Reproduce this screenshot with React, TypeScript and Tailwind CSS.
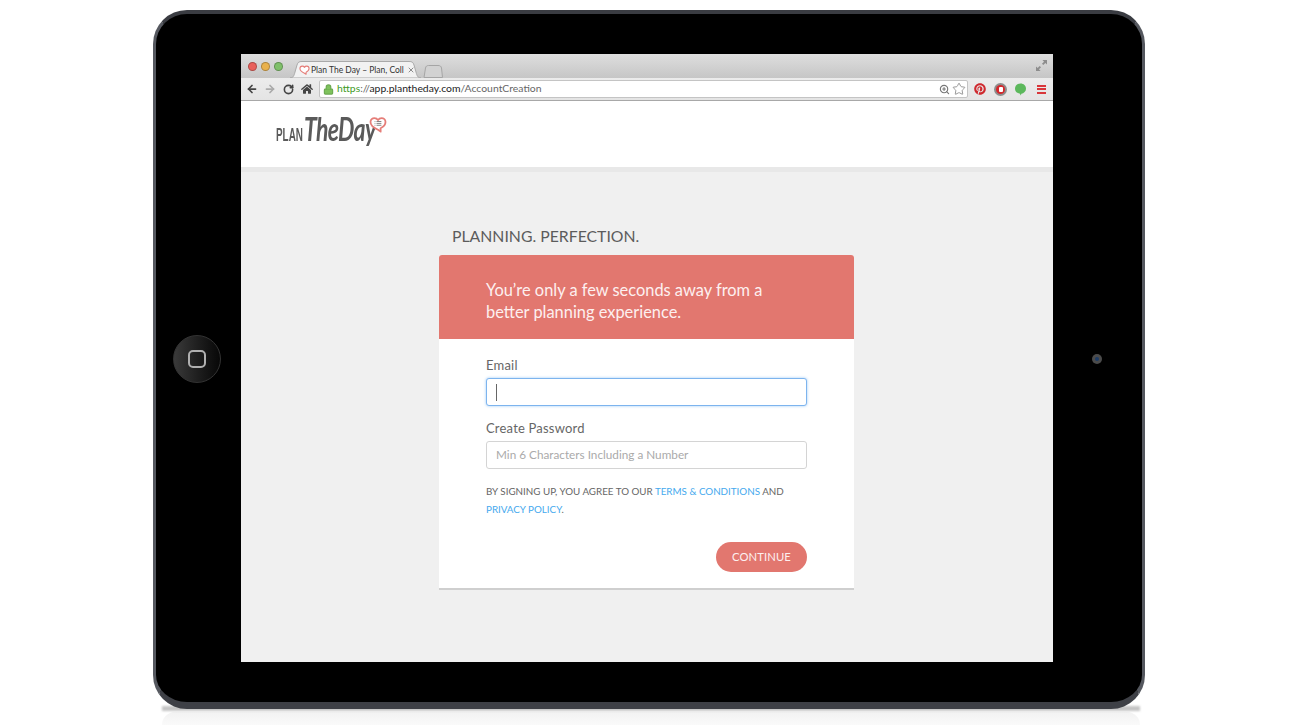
import { ArrowLeft, ArrowRight, Lock, RotateCw, Star, X, ZoomIn } from "lucide-react";
import { FaHome, FaPinterest } from "react-icons/fa";

const HeartIcon = ({ className, lines }: { className: string; lines?: boolean }) => (
  <svg viewBox="0 0 24 22" fill="none" className={className}>
    <path
      d="M12 18 C6 15.5 2 12.5 2 7.8 C2 4.5 4.5 2.5 7.2 2.5 C9.2 2.5 11 3.5 12 5.2 C13 3.5 14.8 2.5 16.8 2.5 C19.5 2.5 22 4.5 22 7.8 C22 11.8 19 14.3 15.5 16 L15.5 20.5 Z"
      stroke="#e57d78"
      strokeWidth="2.4"
      strokeLinejoin="round"
      fill="#fff"
    />
    {lines && (
      <path d="M7.5 7h1M7.5 9.5h1M7.5 12h1M10 7h6.5M10 9.5h6.5M10 12h6.5" stroke="#777" strokeWidth="1.2" />
    )}
  </svg>
);

const TrafficLight = ({ color }: { color: string }) => (
  <span className={`h-[9px] w-[9px] rounded-full border border-black/25 ${color}`} />
);

const BrowserChrome = () => (
  <>
    {/* tab strip */}
    <div className="relative flex h-6 items-start bg-gradient-to-b from-[#dedede] to-[#c6c6c6]">
      <div className="flex gap-[4px] pl-[7px] pt-[8px]">
        <TrafficLight color="bg-[#e9605b]" />
        <TrafficLight color="bg-[#e9b14c]" />
        <TrafficLight color="bg-[#7fc06a]" />
      </div>
      <div className="relative ml-[7px] mt-[7px] flex h-[17px] w-[131px] items-center pl-[9px]">
        <svg viewBox="0 0 131 17" className="absolute inset-0 h-full w-full">
          <path d="M0 17 C3 17 4 15 5 11 L7 4 C8 1 9 .5 12 .5 H119 C122 .5 123 1 124 4 L126 11 C127 15 128 17 131 17 Z" fill="#f2f2f2" stroke="#a9a9a9" />
        </svg>
        <HeartIcon className="relative h-[10px] w-[11px] shrink-0" />
        <span className="relative ml-[1px] w-[94px] overflow-hidden whitespace-nowrap pt-[2px] text-[8.5px] leading-[11px] text-[#333]">
          Plan The Day – Plan, Coll
        </span>
        <X className="relative ml-[2px] h-[8px] w-[8px] text-[#777]" strokeWidth={2.5} />
      </div>
      <svg viewBox="0 0 20 13" className="ml-[2px] mt-[11px] h-[13px] w-[20px]">
        <path d="M1 12.5 L2.5 3 C3 1 4 .5 5.5 .5 H15 C17 .5 18 1 18.5 3 L19.5 12.5 Z" fill="#d2d2d2" stroke="#a5a5a5" />
      </svg>
      <svg viewBox="0 0 12 12" className="absolute right-[6px] top-[6px] h-[11px] w-[11px]" fill="#8d8d8d">
        <path d="M7 0h5v5L10.2 3.2 8 5.5 6.5 4 8.8 1.8zM0 7l1.8 1.8L4 6.5 5.5 8 3.2 10.2 5 12H0z" />
      </svg>
    </div>
    {/* toolbar */}
    <div className="flex h-[23px] items-center border-b border-[#a8a8a8] bg-gradient-to-b from-[#ececec] to-[#e4e4e4] pl-[5px]">
      <ArrowLeft className="h-[12px] w-[12px] text-[#444]" strokeWidth={3.5} />
      <ArrowRight className="ml-[6px] h-[12px] w-[12px] text-[#aaa]" strokeWidth={3.5} />
      <RotateCw className="ml-[7px] h-[11px] w-[11px] text-[#444]" strokeWidth={3.5} />
      <FaHome className="ml-[7px] h-[12px] w-[12px] text-[#444]" />
      <div className="ml-[6px] flex h-[18px] w-[649px] items-center rounded-[2px] border border-[#c4c4c4] bg-white pl-[3px]">
        <Lock className="h-[11px] w-[11px] fill-[#7ec25c] text-[#6aa84f]" strokeWidth={2.5} />
        <span className="ml-[3px] text-[10.4px] text-[#666]">
          <span className="text-[#3f9b25]">https</span>://<span className="text-[#222]">app.plantheday.com</span>/AccountCreation
        </span>
        <ZoomIn className="ml-auto h-[11px] w-[11px] text-[#777]" strokeWidth={2.5} />
        <Star className="ml-[2px] mr-[1px] h-[14px] w-[14px] fill-white text-[#8a8a8a]" strokeWidth={1.5} />
      </div>
      <FaPinterest className="ml-[6px] h-[12px] w-[12px] text-[#cf2a2f]" />
      <div className="relative ml-[8px] flex h-[13px] w-[13px] items-center justify-center rounded-full bg-[#8d8d8d]">
        <span className="h-[9px] w-[9px] rounded-full bg-[#d4272b]" />
        <span className="absolute h-[5px] w-[4px] rounded-[1px] bg-white" />
      </div>
      <svg viewBox="0 0 12 13" className="ml-[8px] h-[13px] w-[11px]">
        <path d="M6 0C9.5 0 12 2.4 12 5.6 12 8.6 9.6 10.6 7 11 L6.2 13 5.4 11C2.6 10.6 0 8.6 0 5.6 0 2.4 2.5 0 6 0Z" fill="#5cb85c" />
      </svg>
      <div className="ml-[11px] flex w-[9px] flex-col gap-[1.5px]">
        <span className="h-[2px] bg-[#d8363a]" />
        <span className="h-[2px] bg-[#d8363a]" />
        <span className="h-[2px] bg-[#d8363a]" />
      </div>
    </div>
  </>
);

const Logo = () => (
  <div className="relative h-[66px] pl-[35px] pt-[7px] text-[#5a5a5a]">
    <div className="flex items-baseline">
      <span className="w-[28px] shrink-0 origin-left scale-x-[0.55] whitespace-nowrap font-['Liberation_Sans',sans-serif] text-[18px] leading-none font-bold">
        PLAN
      </span>
      <span className="origin-left scale-x-[0.7] text-[33px] leading-[40px] font-bold italic tracking-[-1px]">
        TheDay
      </span>
    </div>
    <HeartIcon lines className="absolute left-[128px] top-[14px] h-[19px] w-[18px]" />
  </div>
);

const Field = ({ label, placeholder, focused }: { label: string; placeholder?: string; focused?: boolean }) => (
  <div>
    <label className="block text-[13px] leading-[18px] tracking-[0.2px] text-[#666]">{label}</label>
    <div
      className={
        focused
          ? "mt-[4px] flex h-[28px] items-center rounded-[3px] border border-[#7db4ee] bg-white pl-[9px] shadow-[0_0_3px_#9cc8f5]"
          : "mt-[4px] flex h-[28px] items-center rounded-[3px] border border-[#d4d4d4] bg-white pl-[9px]"
      }
    >
      {focused && <span className="h-[17px] w-px bg-[#666]" />}
      {placeholder && <span className="text-[11.75px] text-[#aaaaaa]">{placeholder}</span>}
    </div>
  </div>
);

const SignupCard = () => (
  <div className="w-[415px]">
    <h1 className="pl-[13px] pt-[1px] text-[15.8px] leading-[19px] text-[#5c5c5c]">PLANNING. PERFECTION.</h1>
    <div className="mt-[10px] overflow-hidden rounded-t-[3px] border-b-2 border-[#cfcfcf] bg-white">
      <div className="h-[84px] bg-[#e2776f] px-[47px] pt-[24px] text-[16.4px] leading-[22px] text-[#fdf0ef]">
        You’re only a few seconds away from a
        <br />
        better planning experience.
      </div>
      <div className="h-[249px] px-[47px] pt-[17px]">
        <Field label="Email" focused />
        <div className="mt-[13px]">
          <Field label="Create Password" placeholder="Min 6 Characters Including a Number" />
        </div>
        <p className="mt-[13px] text-[9.8px] leading-[18px] text-[#666]">
          BY SIGNING UP, YOU AGREE TO OUR <span className="text-[#45a9ee]">TERMS &amp; CONDITIONS</span> AND
          <br />
          <span className="text-[#45a9ee]">PRIVACY POLICY</span>.
        </p>
        <div className="mt-[24px] flex justify-end">
          <button className="h-[30px] w-[91px] rounded-full bg-[#e2776f] text-[11.25px] tracking-[0.1px] text-[#fdf0ef]">
            CONTINUE
          </button>
        </div>
      </div>
    </div>
  </div>
);

export default function App() {
  return (
    <div className="relative h-[725px] w-[1300px] overflow-hidden bg-white pl-[153px] pt-[10px] font-['Lato',sans-serif]">
      {/* reflection under the device */}
      <div className="absolute bottom-0 left-[162px] h-[13px] w-[978px] rounded-t-[20px] bg-gradient-to-b from-[#f2f2f2] to-[#fafafa]" />
      <div className="absolute left-[162px] top-[706px] h-[5px] w-[978px] bg-[#c4c4c4] blur-[1px]" />

      <div className="relative h-[699px] w-[992px] rounded-[34px] border-x-[3px] border-t-[4px] border-b-[7px] border-x-[#55585f] border-t-[#3a3c42] border-b-[#3e4046] bg-black pl-[85px] pt-[40px]">
        <div className="flex h-[608px] w-[812px] flex-col bg-[#f0f0f0]">
          <BrowserChrome />
          <div className="bg-white">
            <Logo />
          </div>
          <div className="h-[5px] bg-[#e8e8e8]" />
          <div className="pl-[198px] pt-[53px]">
            <SignupCard />
          </div>
        </div>

        {/* home button */}
        <div className="absolute left-[17px] top-[321px] flex h-[48px] w-[48px] items-center justify-center rounded-full border border-[#333] bg-gradient-to-r from-[#3a3a3a] to-[#080808]">
          <span className="h-[18px] w-[18px] rounded-[5px] border-[2.5px] border-[#b0b0b0]" />
        </div>
        {/* camera */}
        <div className="absolute left-[936px] top-[340px] flex h-[10px] w-[10px] items-center justify-center rounded-full bg-[#4b4b4b]">
          <span className="h-[4px] w-[4px] rounded-full bg-[#1d3c66]" />
        </div>
      </div>
    </div>
  );
}
